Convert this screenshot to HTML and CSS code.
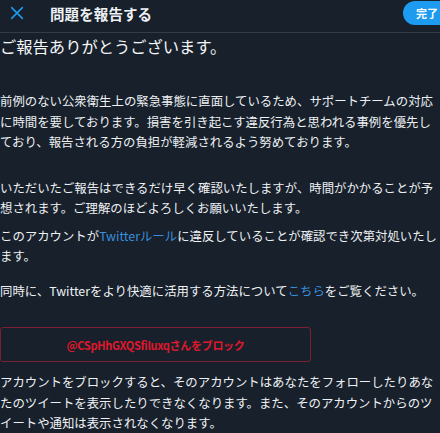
FILE: index.html
```html
<!DOCTYPE html>
<html lang="ja">
<head>
<meta charset="utf-8">
<link rel="stylesheet" href="styles.css">
</head>
<body>
<div class="page">
  <header class="topbar">
    <button class="close" aria-label="閉じる">
      <svg viewBox="0 0 24 24" width="16" height="16"><path d="M4 4 L20 20 M20 4 L4 20" stroke="#1d9bf0" stroke-width="2.4" stroke-linecap="round" fill="none"/></svg>
    </button>
    <h1 class="title">問題を報告する</h1>
    <button class="done">完了</button>
  </header>
  <main class="content">
    <h2 class="heading">ご報告ありがとうございます。</h2>
    <p class="para p1">前例のない公衆衛生上の緊急事態に直面しているため、サポートチームの対応に時間を要しております。損害を引き起こす違反行為と思われる事例を優先しており、報告される方の負担が軽減されるよう努めております。</p>
    <p class="para p2">いただいたご報告はできるだけ早く確認いたしますが、時間がかかることが予想されます。ご理解のほどよろしくお願いいたします。</p>
    <p class="para p3">このアカウントが<a class="link" href="#">Twitterルール</a>に違反していることが確認でき次第対処いたします。</p>
    <p class="para p4">同時に、Twitterをより快適に活用する方法について<a class="link" href="#">こちら</a>をご覧ください。</p>
    <button class="block">@CSpHhGXQSfiluxqさんをブロック</button>
    <p class="para p5">アカウントをブロックすると、そのアカウントはあなたをフォローしたりあなたのツイートを表示したりできなくなります。また、そのアカウントからのツイートや通知は表示されなくなります。</p>
  </main>
</div>
</body>
</html>
```
FILE: styles.css
```css
html, body {
  margin: 0;
  padding: 0;
  background: #17202b;
}
body {
  width: 440px;
  height: 433px;
  overflow: hidden;
  font-family: "Noto Sans CJK JP", "Liberation Sans", sans-serif;
  color: #f2f4f6;
}
.page {
  display: flex;
  flex-direction: column;
}
.topbar {
  display: flex;
  align-items: center;
  border-bottom: 1px solid #323d48;
  box-sizing: border-box;
  height: 33px;
}
.close {
  background: none;
  border: 0;
  padding: 0;
  margin: 0 0 6px 8px;
  width: 18px;
  height: 18px;
  display: flex;
  align-items: center;
  justify-content: center;
}
.title {
  margin: 0 0 6px 24px;
  font-size: 14.5px;
  font-weight: 700;
  color: #eef1f4;
  flex: 1;
  letter-spacing: 0.1px;
}
.done {
  align-self: flex-start;
  margin: 1px -12px 0 0;
  height: 24px;
  width: 49px;
  border: 0;
  border-radius: 12px;
  background: #1d9bf0;
  color: #fff;
  font-family: "Noto Sans CJK JP", sans-serif;
  font-weight: 700;
  font-size: 11px;
  text-align: left;
  padding: 0 0 0 13px;
}
.content {
  display: flex;
  flex-direction: column;
  width: 440px;
}
.heading {
  margin: 1px 0 0 0;
  font-size: 16.3px;
  line-height: 24px;
  font-weight: 400;
  color: #f4f6f8;
}
.para {
  margin: 0;
  font-size: 12.4px;
  line-height: 20.5px;
  color: #eef1f4;
}
.p1 { margin-top: 33px; }
.p2 { margin-top: 25px; }
.p3 { margin-top: 7px; }
.p4 { margin-top: 14px; }
.p5 { margin-top: 10px; }
.link {
  color: #3a8fdc;
  text-decoration: none;
}
.block {
  margin-top: 26px;
  width: 311px;
  height: 35px;
  background: transparent;
  border: 1px solid #7a1f35;
  border-radius: 3px;
  color: #e0182d;
  font-family: "Noto Sans CJK JP", "Liberation Sans", sans-serif;
  font-weight: 700;
  font-size: 11px;
  letter-spacing: -0.3px;
}
```
